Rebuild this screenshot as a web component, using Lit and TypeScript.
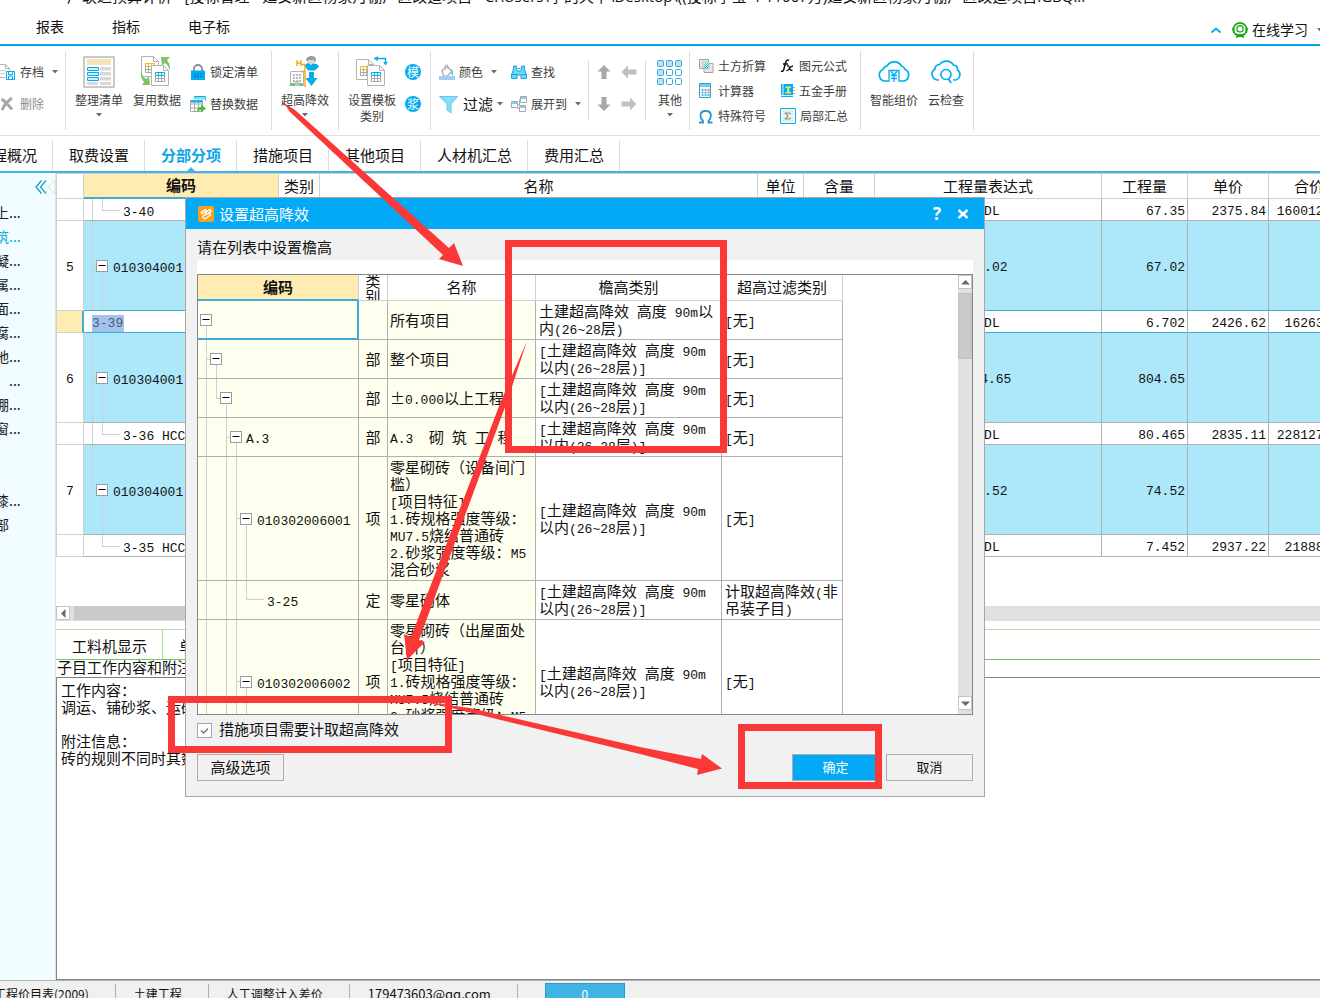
import { LitElement, html, svg, css, nothing, TemplateResult } from "lit";
import { customElement } from "lit/decorators.js";
import { classMap } from "lit/directives/class-map.js";

/* Latin runs use the monospaced face, everything else the CJK face. */
const mix = (text: string) =>
  text
    .split(/([\x20-\x7e]+)/)
    .filter((part) => part !== "")
    .map((part) => (/^[\x20-\x7e]+$/.test(part) ? html`<span class="mono">${part}</span>` : part));

const icon = (w: number, h: number, body: unknown) =>
  html`<svg class="icon" width=${w} height=${h} viewBox="0 0 ${w} ${h}" aria-hidden="true">${body}</svg>`;

const BLUE = "#00aeef";
const GREY = "#b4b4b4";

const sheet = (x: number, y: number, accent: string) => svg`
  <path d="M${x + 0.5} ${y + 0.5}h12l5 5v15h-17z" fill="#fff" stroke=${GREY}/>
  <path d="M${x + 12.5} ${y + 0.5}v5h5" fill="none" stroke=${GREY}/>
  <path d="M${x + 4.5} ${y + 7.5}h9v9h-9zM${x + 7.5} ${y + 7.5}v9M${x + 10.5} ${y + 7.5}v9M${x + 4.5} ${y + 10.5}h9M${x + 4.5} ${y + 13.5}h9" fill="none" stroke="#a8a8a8"/>
  <path d="M${x + 4.5} ${y + 7.5}h9v3h-9zM${x + 7.5} ${y + 7.5}v3M${x + 10.5} ${y + 7.5}v3" fill="none" stroke=${accent}/>`;

const gridCells = [0, 1, 2].flatMap((r) => [0, 1, 2].map((c) => [c, r]));

const icons: Record<string, TemplateResult> = {
  archive: icon(16, 16, svg`
    <path d="M-6 .5H5.5l4 4v2M-6 13.5H5M5.5 .5v4h4" fill="none" stroke=${GREY}/>
    <path d="M0 6.5h6M0 9.5h5" stroke="#d0d0d0"/>
    <path d="M6.5 7.5h8v8h-8z" fill="#fff" stroke=${BLUE}/>
    <path d="M8.5 8v2.5h4V8M8.5 15v-3h4v3" fill="none" stroke=${BLUE}/>`),
  remove: icon(16, 16, svg`<path d="M1.5 3Q6 6 12 13.5M12 2Q5 7 2 14" fill="none" stroke="#a6a6a6" stroke-width="2.8"/>`),
  arrange: icon(32, 32, svg`
    <path d="M1 1h30v30H1z" fill="#fff" stroke="#b8b8b8" stroke-width="1.5"/>
    <path d="M4 3h24v6H4z" fill="#f3e3b5"/>
    <path d="M17 11h11v3.5H17zM17 16h11v3.5H17zM17 21h11v3.5H17zM17 26h11v3H17zM4 26h11v3H4z" fill="#d8d8da"/>
    <path d="M4.5 11.5h11v3h-11zM4.5 16.5h11v3h-11zM4.5 21.5h11v3h-11z" fill="#d6edf8" stroke=${BLUE}/>`),
  reuse: icon(32, 32, svg`
    ${sheet(0, 0, "#fbb829")}${sheet(10, 9, BLUE)}
    <path d="M20 1h9l-3 3q4 5 2.5 11Q28 9 23.500 7L21 10z" fill="#7ec36b"/>
    <path d="M9 29H1l2-3Q-1 22 .5 16 2 22 5.500 23L8 20z" fill="#7ec36b"/>`),
  lock: icon(16, 16, svg`
    <path d="M4 8V5a4 4 0 0 1 8 0v3" fill="none" stroke="#8c8c94" stroke-width="1.8"/>
    <path d="M1 6.5h14V16H1z" fill=${BLUE}/>
    <path d="M4 10h2m1 0h2m1 0h2M4 12.5h2m1 0h2m1 0h2" stroke="#0076ae"/>`),
  replace: icon(16, 16, svg`
    <path d="M4 .5h11.5v4" fill="none" stroke=${BLUE}/><path d="M3.5 1h12v2.5h-12z" fill="#8fd9f5"/>
    <path d="M.5 4.5h12v11H.5zM.5 8h12M.5 12h12M4.5 5v10M8.5 5v10" fill="#fff" stroke="#a9a9a9"/>
    <path d="M.5 4.5h12v2H.5z" fill=${BLUE}/>
    <path d="M7 16q0-5 4-5V8.5l5 4-5 4V14q-2 0-4 2z" fill="#4fbf3b"/>`),
  height: icon(32, 32, svg`
    <path d="M1.5 15.5h13v14h-13z" fill="#fff" stroke=${GREY}/>
    <path d="M4 19h8M4 22h8M4 25h8" stroke="#b9b9b9" stroke-width="2" stroke-dasharray="2 1"/>
    <path d="M6 25h4v5H6z" fill="#b4cbd6"/><path d="M0 30l2-3h4v3zM10 30v-3h3l2 3z" fill="#7ec36b"/>
    <path d="M8 4v6M12 4v6M8 7h4M16 8v23M12 8.5h4M12 15.5h4" fill="none" stroke="#f9a21a" stroke-width="1.4"/>
    <path d="M17 4q1-4 5.5-4T27 4l-1 2h-7z" fill="#9b9b9b"/><path d="M19 4h6v3q-3 2.5-6 0z" fill="#d9d9d9"/>
    <path d="M16 10q2-4 4-2.5l2 1.5 2-1.5q4-.5 6 3l-4 4h-7z" fill=${BLUE}/>
    <path d="M20 16h5v6h3.5L22.5 30 16.5 22H20z" fill=${BLUE}/>`),
  template: icon(32, 32, svg`
    ${sheet(0, 3, "#fbb829")}${sheet(11, 9, BLUE)}
    <path d="M18 2.5h11.5V9" fill="none" stroke=${BLUE} stroke-width="1.4"/>
    <path d="M22 0v5l-4-2.5zM27 6h5l-2.5 3z" fill=${BLUE}/>`),
  colour: icon(16, 16, svg`
    <path d="M3 6.5l5-4 5 5-4.5 4.5H4.5z" fill="#fff" stroke="#a8a8a8" stroke-width="1.2"/>
    <path d="M6 6V2q1.5-3 3 0v3" fill="none" stroke="#a8a8a8"/>
    <path d="M12 4q3 4 1.5 8-2-2-1-5z" fill="#49cdec"/><path d="M0 12h16v4H0z" fill="#a0cbf3"/>`),
  filter: icon(20, 20, svg`<path d="M.5 2.5h18L12 10v9l-4-3v-6z" fill="#8bdcf8" stroke="#5cccf2"/>`),
  find: icon(16, 16, svg`
    <path d="M2.5 2h3v3l1 2h3l1-2V2h3v3l2 6v3.500h-5.5V11h-4v3.500H.5V11l2-6z" fill="#6fd4f7" stroke="#16a7df"/>
    <path d="M.5 10.5h5.5M10 10.5h5.5M6.5 4.5h3" stroke="#16a7df"/>`),
  expand: icon(16, 16, svg`
    <path d="M.5 5.5h6v6h-6zM9.500.5h6v6h-6zM8.500 9.5h6v6h-6z" fill="#fff" stroke="#a9a9a9"/>
    <path d="M1 6h5v2H1zM10 1h5v2h-5zM9 10h5v2H9z" fill="#7bd3f4"/><path d="M6.5 8.5h2v-5M8 12.5h-1.5" fill="none" stroke="#a9a9a9"/>`),
  up: icon(14, 16, svg`<path d="M7 1l6.5 6.5H9.5V15h-5V7.5H.5z" fill="#a8a8a8"/>`),
  down: icon(14, 16, svg`<path d="M7 15L.5 8.5h4V1h5v7.5h4z" fill="#a8a8a8"/>`),
  left: icon(16, 14, svg`<path d="M.5 7L7 .5v4h8.500v5H7v4z" fill="#bfbfbf"/>`),
  right: icon(16, 14, svg`<path d="M15.5 7L9 .5v4H.5v5H9v4z" fill="#bfbfbf"/>`),
  more: icon(26, 32, svg`${gridCells.map(([c, r]) => svg`<rect x=${c * 9 + 0.5} y=${r * 9 + 4.5} width="6" height="6" rx="1"
    fill=${r === 0 || c === 0 ? "#bfe0f2" : "#fff"} stroke="#2fa9d8"/>`)}`),
  soil: icon(15, 16, svg`
    <path d="M.5 1.5h9v9h-9zM5 5.5h9v9H5z" fill="#e6e6e6" stroke="#a2a2a2"/>
    <path d="M4 4h6v6H4z" fill="#e8fafa" stroke="#9cc"/><path d="M5 6.5h5M5 8.500h5M6.5 5v5M8.5 5v5" stroke="#3bb" stroke-dasharray="1 1"/>`),
  calc: icon(15, 16, svg`
    <path d="M.5.5h11v14H.5z" fill="#fff" stroke="#2d9fd0"/><path d="M1 1h10v3H1z" fill="#7cc9ea"/>
    <path d="M2.5 7h2m1 0h2M2.5 9.5h2m1 0h2m1 0h2M2.5 12h2m1 0h2m1 0h2" stroke="#2d9fd0" stroke-width="1.5"/><path d="M8.5 7h2" stroke="#f04e30" stroke-width="1.5"/>`),
  omega: icon(15, 16, svg`<path d="M0 14.500h4V13Q1.500 10.500 1.500 7.500 1.500 3 6.700 3t5.200 4.500Q11.900 10.500 9.500 13v1.500h4" fill="none" stroke="#2c93cf" stroke-width="1.8"/>`),
  fx: icon(15, 16, svg`
    <path d="M9 2.5Q6.5 1 5.5 5L3.8 11.5Q3.200 14 1 13M3 6h5" fill="none" stroke="#111" stroke-width="1.5"/>
    <path d="M7 8q2-1 2.5 2t3 2M13 8q-2 0-3.5 2.5T6.5 12.5" fill="none" stroke="#111" stroke-width="1.3"/>`),
  book: icon(15, 16, svg`
    <path d="M1 1h12v13H1z" fill=${BLUE}/><path d="M3 1v11M1 12.5h12" stroke="#d9f3fd"/>
    <path d="M5.500 3.500h5.500v1.500H9.300v4H11v1.500H5.500V9h1.700V5H5.500z" fill="#ffe14d"/><path d="M14 4v1m0 2v1m0 2v1" stroke="#1d6e96"/>`),
  sum: icon(16, 16, svg`
    <path d="M.5.5h15v15H.5z" fill="#eef8fd" stroke=${BLUE}/><path d="M2.5 3h11M2.5 13h11M3 6h2M3 9.5h2M11 6h2M11 9.5h2" stroke="#f5cf79" stroke-dasharray="2 1"/>
    <path d="M10 6.5V5H5.5L8 8l-2.5 3H10V9.5" fill="none" stroke="#8a8a8a" stroke-width="1.2"/>`),
  cloudYen: icon(32, 32, svg`
    <path d="M9 25H7a6 6 0 0 1-2-11.5A5 5 0 0 1 9 10a8.500 8.500 0 0 1 14.500 0A5 5 0 0 1 27 13.500 6 6 0 0 1 25 25h-2" fill="none" stroke=${BLUE} stroke-width="1.7"/>
    <path d="M8.500 25h2.500V14.500h10V25h2.500M13 15.500l3 3.500 3-3.500M16 19v7M13 19.500h6M13 22.500h6" fill="none" stroke=${BLUE} stroke-width="1.3"/>`),
  cloudFind: icon(32, 32, svg`
    <path d="M9 24H7A6 6 0 0 1 5 13Q5 9 9.5 8.500A8.5 8.5 0 0 1 23.5 9Q28 9.5 27.500 14A5.500 5.500 0 0 1 25 24h-2" fill="none" stroke=${BLUE} stroke-width="1.7"/>
    <circle cx="16" cy="18.5" r="5" fill="none" stroke=${BLUE} stroke-width="1.6"/><path d="M18.5 23l2.5 4" stroke=${BLUE} stroke-width="1.7"/>`),
  headset: icon(16, 16, svg`
    <circle cx="8" cy="7.5" r="6.600" fill="none" stroke="#18a818" stroke-width="1.6"/>
    <circle cx="8" cy="6.8" r="3.200" fill="#fff" stroke="#18a818" stroke-width="1.3"/>
    <path d="M0 6h2.5v5H1zM13.5 6H16l-1 5h-1.5zM4 16q.5-4 4-4t4 4l-2-.5-2-1.5-2 1.5z" fill="#18a818"/>
    <path d="M4 12l4 2 4-2" fill="none" stroke="#18a818" stroke-width="1.5"/>`),
  chevronUp: icon(12, 8, svg`<path d="M1.5 6.5L6 2.5l4.5 4" fill="none" stroke="#1ba9ea" stroke-width="2"/>`),
  collapse: icon(12, 14, svg`<path d="M6.5.5L1 7l5.500 6.5M11 .5L5.5 7l5.500 6.500" fill="none" stroke="#1b9fc9" stroke-width="1.3"/>`),
  notch: icon(7, 14, svg`<path d="M7 0v14L.5 7z" fill="#fff" stroke="#dcdcdc"/>`),
  app: icon(16, 16, svg`<rect width="16" height="16" rx="2" fill="#f8a11c"/>
    <path d="M3 6.500L7.500 3.500l1 1.500L4.500 8zM8 6l4-2.500 1 2L7.500 9zM5 10l6.500-3 1 2L7 13l-2-1.500z" fill="none" stroke="#fff" stroke-width="1.300"/>`),
  close: icon(12, 12, svg`<path d="M1.5 2l9 8M10.5 2l-9 8" stroke="#fff" stroke-width="2.4"/>`),
};

const caret = html`<svg class="caret" width="6" height="4" viewBox="0 0 6 4" aria-hidden="true"><path d="M0 0h6L3 3.5z" fill="#6a6a6a"/></svg>`;
const arrowHead = (d: string) => html`<svg width="9" height="9" viewBox="0 0 9 9" aria-hidden="true"><path d=${d} fill="#666a73"/></svg>`;

const big = (name: string, lines: string[], more = false) => html`
  <button class="big">${icons[name]}${lines.map((l) => html`<span>${l}</span>`)}${more ? caret : nothing}</button>`;
const small = (name: string, label: string, more = false, kind = "") => html`
  <button class="small ${kind}">${icons[name]}<span>${label}</span>${more ? caret : nothing}</button>`;
const badge = (glyph: string) => html`<button class="small"><span class="badge">${glyph}</span></button>`;

type Line = [number, number, number, number];
interface Tree { width: number; lines: Line[]; box?: [number, number]; }
const tree = (t: Tree, height: number) => html`
  <svg class="tree" width=${t.width} height=${height} viewBox="0 0 ${t.width} ${height}" aria-hidden="true">
    ${t.lines.map(([x1, y1, x2, y2]) => svg`<line x1=${x1} y1=${y1} x2=${x2} y2=${y2} stroke="#cfcfd2"/>`)}
    ${t.box
      ? svg`<rect x=${t.box[0]} y=${t.box[1]} width="11" height="11" fill="#fff" stroke="#9c9c9c"/>
            <line x1=${t.box[0] + 2} x2=${t.box[0] + 9} y1=${t.box[1] + 5} y2=${t.box[1] + 5} stroke="#000"/>`
      : nothing}
  </svg>`;

interface BillRow { no: string; code: string; kind: "item" | "child" | "edit"; last?: boolean; expr: string; qty: string; price: string; total: string; }
const bill: BillRow[] = [
  { no: "", code: "3-40", kind: "child", expr: "QDL", qty: "67.35", price: "2375.84", total: "160012.82" },
  { no: "5", code: "010304001", kind: "item", expr: "67.02", qty: "67.02", price: "", total: "" },
  { no: "", code: "3-39", kind: "edit", expr: "QDL", qty: "6.702", price: "2426.62", total: "16263.21" },
  { no: "6", code: "010304001", kind: "item", expr: "804.65", qty: "804.65", price: "", total: "" },
  { no: "", code: "3-36 HCC", kind: "child", expr: "QDL", qty: "80.465", price: "2835.11", total: "228127.13" },
  { no: "7", code: "010304001", kind: "item", last: true, expr: "74.52", qty: "74.52", price: "", total: "" },
  { no: "", code: "3-35 HCC", kind: "child", last: true, expr: "QDL", qty: "7.452", price: "2937.22", total: "21888.16" },
];
const billTree = (r: BillRow): Tree =>
  r.kind === "item"
    ? { width: 29, box: [12.5, 39.5], lines: [[8.5, 0, 8.5, r.last ? 45 : 89], [8, 45.5, 12, 45.5], [18.5, 51, 18.5, 89]] }
    : { width: 39, lines: [...(r.last ? [] : [[8.5, 0, 8.5, 21] as Line]), [18.5, 0, 18.5, 11], [18, 11.5, 36, 11.5]] };

const USUAL = "[土建超高降效 高度 90m\n以内(26~28层)]";
interface DropRow { h: number; code: string; type: string; name: string; eave: string; filter: string; t: Tree; }
const drops: DropRow[] = [
  { h: 38, code: "", type: "", name: "所有项目", eave: "土建超高降效 高度 90m以\n内(26~28层)", filter: "[无]",
    t: { width: 20, box: [2.5, 13.5], lines: [[8.5, 25, 8.5, 38]] } },
  { h: 38, code: "", type: "部", name: "整个项目", eave: USUAL, filter: "[无]",
    t: { width: 30, box: [12.5, 13.5], lines: [[8.5, 0, 8.5, 38], [8, 19.5, 12, 19.5], [18.5, 25, 18.5, 38]] } },
  { h: 38, code: "", type: "部", name: "±0.000以上工程", eave: USUAL, filter: "[无]",
    t: { width: 40, box: [22.5, 13.5], lines: [[8.5, 0, 8.5, 38], [18.5, 0, 18.5, 20], [18, 19.5, 22, 19.5], [28.5, 25, 28.5, 38]] } },
  { h: 38, code: "A.3", type: "部", name: "A.3  砌 筑 工 程", eave: USUAL, filter: "[无]",
    t: { width: 48, box: [32.5, 13.5], lines: [[8.5, 0, 8.5, 38], [28.5, 0, 28.5, 38], [28, 19.5, 32, 19.5], [38.5, 25, 38.5, 38]] } },
  { h: 123, code: "010302006001", type: "项", name: "零星砌砖（设备间门\n槛）\n[项目特征]\n1.砖规格强度等级：\nMU7.5烧结普通砖\n2.砂浆强度等级：M5\n混合砂浆", eave: USUAL, filter: "[无]",
    t: { width: 59, box: [42.5, 56.5], lines: [[8.5, 0, 8.5, 123], [28.5, 0, 28.5, 123], [38.5, 0, 38.5, 123], [38, 61.5, 42, 61.5], [48.5, 68, 48.5, 123]] } },
  { h: 38, code: "3-25", type: "定", name: "零星砌体", eave: USUAL, filter: "计取超高降效(非\n吊装子目)",
    t: { width: 69, lines: [[8.5, 0, 8.5, 38], [28.5, 0, 28.5, 38], [38.5, 0, 38.5, 38], [48.5, 0, 48.5, 19], [48, 18.5, 66, 18.5]] } },
  { h: 123, code: "010302006002", type: "项", name: "零星砌砖（出屋面处\n台阶）\n[项目特征]\n1.砖规格强度等级：\nMU7.5烧结普通砖\n2.砂浆强度等级：M5\n混合砂浆", eave: USUAL, filter: "[无]",
    t: { width: 59, box: [42.5, 56.5], lines: [[8.5, 0, 8.5, 123], [28.5, 0, 28.5, 123], [38.5, 0, 38.5, 123], [38, 61.5, 42, 61.5], [48.5, 68, 48.5, 123]] } },
];

const shared = css`
  * { box-sizing: border-box; }
  .mono { font-family: "Liberation Mono", monospace; font-size: 13px; line-height: 11px; white-space: pre; }
  button { font: inherit; color: inherit; background: none; border: 0; padding: 0; margin: 0; }
  svg { display: block; flex: none; }
  table { border-collapse: separate; border-spacing: 0; table-layout: fixed; }
  th { font-weight: 400; padding: 0 0 2px; text-align: center; }
  td { padding: 0 0 2px; }
  .tree-cell { display: flex; align-items: center; white-space: nowrap; overflow: hidden; }
  .tree-cell span { padding-bottom: 1px; }
`;

@customElement("ribbon-bar")
class RibbonBar extends LitElement {
  static styles = [shared, css`
    :host { display: block; font-size: 12px; line-height: 16px; color: #3c3c3c; }
    .ribbon { display: flex; padding: 5px 0; height: 90px; border-bottom: 1px solid #dedede; background: #fff; white-space: nowrap; }
    .group { display: flex; flex: none; align-items: flex-start; }
    .sep { flex: none; width: 1px; background: #dcdcdc; }
    .sep.short { margin: 9px 0 10px; }
    .col { display: flex; flex-direction: column; padding-top: 5px; }
    .small { display: flex; align-items: center; gap: 4px; height: 32px; }
    .small .caret { margin-left: 4px; }
    .big { display: flex; flex: none; flex-direction: column; align-items: center; width: 58px; padding-top: 5px; }
    .big .icon { margin-bottom: 4px; }
    .big .caret { margin-top: 5px; }
    .muted { color: #8c8c8c; }
    .strong { font-size: 15px; color: #111; }
    .strong .caret { margin-left: 0; }
    .badge { width: 16px; height: 16px; border-radius: 8px; background: #00aeef; color: #fff; font-size: 12px; line-height: 16px; text-align: center; }
    .edit { padding-left: 4px; }
    .archive { width: 65px; }
    .list { width: 205px; padding-left: 4px; }
    .height { width: 66px; padding-left: 4px; }
    .template { width: 91px; padding-left: 4px; }
    .template .col { padding-left: 4px; }
    .view { width: 157px; padding-left: 8px; }
    .view .col { width: 72px; }
    .view .col + .col { width: 77px; }
    .move { display: grid; grid-template-columns: 16px 16px; align-content: start; gap: 0 9px; padding: 5px 9px 0 7px; width: 56px; }
    .move button { display: grid; place-items: center; height: 32px; }
    .other { width: 43px; }
    .other .big { width: 48px; }
    .tools { display: grid; grid-template-columns: 81px 81px; align-content: start; width: 170px; padding: 2px 0 0 9px; }
    .tools .small { height: 25px; }
    .cloud { width: 112px; padding-left: 4px; }
    .cloud .big + .big { width: 46px; }
  `];
  render() {
    const sep = html`<i class="sep"></i>`;
    const short = html`<i class="sep short"></i>`;
    return html`<div class="ribbon">
      <div class="group archive"><div class="col">${small("archive", "存档", true)}${small("remove", "删除", false, "muted")}</div></div>${sep}
      <div class="group list">${big("arrange", ["整理清单"], true)}${big("reuse", ["复用数据"])}
        <div class="col edit">${small("lock", "锁定清单")}${small("replace", "替换数据")}</div></div>${sep}
      <div class="group height">${big("height", ["超高降效"], true)}</div>${sep}
      <div class="group template">${big("template", ["设置模板", "类别"])}<div class="col">${badge("模")}${badge("浆")}</div></div>${sep}
      <div class="group view">
        <div class="col">${small("colour", "颜色", true)}${small("filter", "过滤", true, "strong")}</div>
        <div class="col">${small("find", "查找")}${small("expand", "展开到", true)}</div></div>${short}
      <div class="group move">
        <button aria-label="上移">${icons.up}</button><button aria-label="左移">${icons.left}</button>
        <button aria-label="下移">${icons.down}</button><button aria-label="右移">${icons.right}</button></div>${short}
      <div class="group other">${big("more", ["其他"], true)}</div>${sep}
      <div class="group tools">${small("soil", "土方折算")}${small("fx", "图元公式")}${small("calc", "计算器")}${small("book", "五金手册")}${small("omega", "特殊符号")}${small("sum", "局部汇总")}</div>${sep}
      <div class="group cloud">${big("cloudYen", ["智能组价"])}${big("cloudFind", ["云检查"])}</div>${sep}
    </div>`;
  }
}

@customElement("bill-grid")
class BillGrid extends LitElement {
  static styles = [shared, css`
    :host { display: block; overflow: hidden; border-left: 1px solid #d0d0d0; border-top: 1px solid #d0d0d0; line-height: 17px; }
    table { width: 1293px; }
    th, td { border-right: 1px solid #d0d0d0; border-bottom: 1px solid #d0d0d0; white-space: nowrap; overflow: hidden; }
    th { height: 25px; }
    td { border-color: #b0b0b0; }
    td:first-child { text-align: center; border-color: #d0d0d0; }
    td.cell { padding: 0; }
    .code { background: #ffecb2; font-weight: 700; border-bottom: 2px solid #40acd4; }
    .item td:not(:first-child) { background: #ade8fa; }
    .c { text-align: center; }
    .r { text-align: right; padding-right: 2px; }
    .edit td:not(:first-child), .above td:not(:first-child) { border-bottom-color: #40acd4; }
    .edit td:first-child { background: #ffecb2; border-right: 2px solid #40acd4; }
    .entry { display: block; width: 32px; height: 17px; margin: 4px 0 0 8px; padding: 0; border: 0; background: #a4c2ef; color: #4d5a70; font: 13px/17px "Liberation Mono", monospace; }
  `];
  render() {
    return html`<table>
      <colgroup><col width="27"><col width="195"><col width="41"><col width="438"><col width="46"><col width="71"><col width="227"><col width="86"><col width="81"><col width="81"></colgroup>
      <thead><tr><th></th><th class="code">编码</th>${["类别", "名称", "单位", "含量", "工程量表达式", "工程量", "单价", "合价"].map((h) => html`<th>${h}</th>`)}</tr></thead>
      <tbody>${bill.map((r, i) => {
        const h = r.kind === "item" ? 89 : 21;
        return html`<tr class=${classMap({ item: r.kind === "item", edit: r.kind === "edit", above: bill[i + 1]?.kind === "edit" })}>
          <td>${mix(r.no)}</td>
          <td class="cell">${r.kind === "edit"
            ? html`<div class="tree-cell"><svg width="0" height="21"></svg><input class="entry" aria-label="编码" .value=${r.code}></div>`
            : html`<div class="tree-cell">${tree(billTree(r), h)}<span>${mix(r.code)}</span></div>`}</td>
          <td></td><td></td><td></td><td></td>
          <td class="c">${mix(r.expr)}</td><td class="r">${mix(r.qty)}</td><td class="r">${mix(r.price)}</td><td class="r">${mix(r.total)}</td>
        </tr>`;
      })}</tbody></table>`;
  }
}

@customElement("drop-dialog")
class DropDialog extends LitElement {
  static styles = [shared, css`
    :host { display: flex; flex-direction: column; border: 1px solid #a6a6a6; background: #f1f1f1; line-height: 17px; }
    .title { display: flex; align-items: center; height: 31px; padding: 0 14px 0 12px; background: #03a9f4; color: #fff; }
    .title h2 { flex: 1; margin: 0 0 0 5px; font-size: 15px; font-weight: 400; }
    .title button { display: grid; place-items: center; width: 26px; height: 26px; }
    .help { font: 700 17px/26px "Open Sans", sans-serif; }
    .title .shut { width: 14px; margin-left: 6px; }
    .body { flex: 1; display: flex; flex-direction: column; min-height: 0; padding: 0 11px; }
    .hint { margin: 0; height: 31px; padding-top: 9px; }
    .strip { height: 14px; background: #fff; }
    .frame { display: flex; height: 441px; overflow: hidden; border: 1px solid #828790; background: #fff; }
    .view { flex: 1; overflow: hidden; }
    table { width: 645px; }
    th, td { border-right: 1px solid #d0d0d0; border-bottom: 1px solid #d0d0d0; overflow: hidden; }
    th { height: 26px; }
    th.wrap { padding: 0; }
    .tall { width: 15px; height: 25px; margin: 0 auto; line-height: 15px; display: flex; align-items: center; }
    td { border-color: #b0b0b0; white-space: pre; padding-left: 3px; }
    td:nth-child(-n + 3) { background: #fffff0; }
    .code { background: #ffecb2; font-weight: 700; border-bottom: 2px solid #40acd4; }
    .first td:first-child { border-right: 2px solid #40acd4; border-bottom: 2px solid #40acd4; }
    td.cell { padding: 0; }
    td.type { padding: 0 0 2px; text-align: center; }
    td.name { padding-left: 2px; }
    .bar { width: 14px; background: #e1e1e1; display: flex; flex-direction: column; padding-bottom: 4px; }
    .bar button { display: grid; place-items: center; width: 14px; height: 14px; background: #fff; border: 1px solid #c4c4c4; }
    .thumb { height: 66px; margin-top: 4px; background: #cacaca; border: 1px solid #c0c0c0; }
    .space { flex: 1; }
    .check { display: flex; align-items: center; gap: 7px; height: 30px; margin-bottom: 9px; }
    .check span { padding-bottom: 3px; }
    .check input { appearance: none; width: 15px; height: 15px; margin: 0; border: 1px solid #a6a6a6; background: #fff
      url("data:image/svg+xml,%3Csvg xmlns='http://www.w3.org/2000/svg' viewBox='0 0 13 13'%3E%3Cpath d='M3 6.500l2.500 2.500L10 4.500' fill='none' stroke='%23707880' stroke-width='1.500'/%3E%3C/svg%3E"); }
    .actions { display: flex; gap: 7px; }
    .actions button { width: 87px; height: 27px; padding-bottom: 2px; border: 1px solid #adadad; font-size: 13px; }
    .actions .more { margin-right: auto; font-size: 15px; }
    .actions .ok { background: #03a9f4; color: #fff; }
  `];
  render() {
    return html`
      <div class="title">${icons.app}<h2>设置超高降效</h2><button class="help" aria-label="帮助">?</button><button class="shut" aria-label="关闭">${icons.close}</button></div>
      <div class="body">
        <p class="hint">请在列表中设置檐高</p>
        <div class="strip"></div>
        <div class="frame">
          <div class="view"><table>
            <colgroup><col width="161"><col width="29"><col width="148"><col width="186"><col width="121"></colgroup>
            <thead><tr><th class="code">编码</th><th class="wrap"><div class="tall">类别</div></th><th>名称</th><th>檐高类别</th><th>超高过滤类别</th></tr></thead>
            <tbody>${drops.map((r, i) => html`<tr class=${classMap({ first: i === 0 })}>
              <td class="cell"><div class="tree-cell">${tree(r.t, i === 0 ? 37 : r.h)}<span>${mix(r.code)}</span></div></td>
              <td class="type">${r.type}</td><td class="name">${mix(r.name)}</td><td>${mix(r.eave)}</td><td>${mix(r.filter)}</td></tr>`)}</tbody>
          </table></div>
          <div class="bar"><button aria-label="向上">${arrowHead("M0 6.5h9L4.5 2z")}</button><div class="thumb"></div><div class="space"></div><button aria-label="向下">${arrowHead("M0 2.5h9L4.5 7z")}</button></div>
        </div>
        <label class="check"><input type="checkbox" checked><span>措施项目需要计取超高降效</span></label>
        <div class="actions"><button class="more">高级选项</button><button class="ok">确定</button><button>取消</button></div>
      </div>`;
  }
}

@customElement("app-root")
class AppRoot extends LitElement {
  static styles = [shared, css`
    :host { display: flex; flex-direction: column; position: relative; height: 100vh; overflow: hidden; background: #fff; color: #111;
      font-family: "Noto Sans CJK SC", sans-serif; font-size: 15px; line-height: 17px; }
    .caption { flex: none; height: 8px; overflow: hidden; padding-left: 67px; white-space: nowrap; line-height: 20px; font-family: "Open Sans", "Noto Sans CJK SC", sans-serif; }
    .caption span { display: block; margin-top: -14px; }
    .menu { flex: none; display: flex; align-items: center; gap: 48px; height: 38px; padding-left: 36px; border-bottom: 2px solid #00a8f3; font-size: 14px; }
    .learn { display: flex; align-items: center; gap: 4px; margin: 7px -3px 0 auto; }
    .learn .icon:first-child { margin-right: 6px; }
    .learn .caret { margin-left: 5px; }
    .tabs { flex: none; display: flex; height: 37px; padding-top: 4px; border-bottom: 2px solid #40b4e5; overflow: hidden; }
    .tabs button { flex: none; position: relative; padding: 0 15px 2px 16px; border-right: 1px solid #dcdcdc; }
    .tabs button:first-child { margin-left: -39px; }
    .tabs .on { color: #0ba5e6; font-weight: 700; }
    .tabs .on::after { content: ""; position: absolute; left: 42px; bottom: 0; border: 4px solid transparent; border-top: 0; border-bottom-color: #40b4e5; }
    .work { flex: 1; display: flex; min-height: 0; }
    aside { flex: none; width: 56px; background: #f0fcff; overflow: hidden; border-right: 1px solid #e2e2e2; }
    .fold { display: flex; align-items: center; justify-content: space-between; height: 27px; padding-left: 35px; }
    aside a { display: block; height: 24px; line-height: 24px; margin-left: -5px; font-size: 14px; white-space: pre; color: #222; text-decoration: none; }
    aside a.on { color: #1ba9d8; }
    main { flex: 1; min-width: 0; display: flex; flex-direction: column; }
    .scroll { flex: none; display: flex; height: 15px; margin-top: auto; background: #e0e0e0; }
    .scroll button { display: grid; place-items: center; width: 14px; height: 14px; background: #fff; border: 1px solid #c4c4c4; }
    .scroll .thumb { width: 70%; margin: 0 0 1px 4px; background: #cacaca; }
    .upper { flex: none; height: 448px; display: flex; flex-direction: column; }
    .lower-tabs { flex: none; display: flex; margin-top: 8px; height: 31px; border-top: 1px solid #b5e0a5; border-bottom: 1px solid #74c760; }
    .lower-tabs button { padding: 2px 15px 0 16px; border-right: 1px solid #a8e090; }
    .sub { flex: none; height: 17px; margin: 0; padding-left: 1px; line-height: 14px; }
    .note { flex: 1; display: block; width: 100%; min-height: 0; margin: 0; padding: 3px 4px; border: 1px solid #828282; border-right: 0; resize: none; outline: 0; overflow: hidden; font: inherit; color: inherit; }
    footer { flex: none; display: flex; height: 18px; border-top: 1px solid #b4b4b4; background: #f0f0f0; overflow: hidden; font-size: 12px; white-space: nowrap; }
    footer span { margin-top: 3px; line-height: 20px; padding: 0 26px 0 18px; border-right: 1px solid #a8b0b8; }
    footer span:first-child { margin-left: -24px; }
    footer .mail { font-size: 13px; }
    footer output { width: 80px; height: 24px; margin: 2px 0 0 27px; background: #42b4e4; border: 1px solid #2899c9; color: #fff; text-align: center; line-height: 20px; }
    drop-dialog { position: absolute; left: 185px; top: 197px; width: 800px; height: 600px; }
    .marks { position: absolute; left: 0; top: 0; pointer-events: none; }
  `];
  render() {
    const side = ["上...", "筑...", "凝...", "属...", "面...", "腐...", "地...", "　...", "棚...", "窗...", "", "", "漆...", "部"];
    return html`
      <div class="caption"><span>广联达预算计价 - [投标管理 - 延安新区杨家月棚户区改造项目 - C:\\Users\\李的天下\\Desktop\\((投标李宝-4-11007万)延安新区杨家月棚户区改造项目.GBQ...</span></div>
      <nav class="menu"><button>报表</button><button>指标</button><button>电子标</button>
        <button class="learn">${icons.chevronUp}${icons.headset}<span>在线学习</span>${caret}</button></nav>
      <ribbon-bar></ribbon-bar>
      <nav class="tabs">${["工程概况", "取费设置", "分部分项", "措施项目", "其他项目", "人材机汇总", "费用汇总"].map((t) => html`<button class=${classMap({ on: t === "分部分项" })}>${t}</button>`)}</nav>
      <div class="work">
        <aside><div class="fold">${icons.collapse}${icons.notch}</div>
          ${side.map((s, i) => html`<a href="#" class=${classMap({ on: i === 1 })}>${s}</a>`)}</aside>
        <main>
          <div class="upper"><bill-grid></bill-grid>
            <div class="scroll"><button aria-label="向左">${arrowHead("M6.5 0v9L2 4.5z")}</button><div class="thumb"></div></div></div>
          <div class="lower-tabs"><button>工料机显示</button><button>单价构成</button></div>
          <label class="sub" for="note">子目工作内容和附注信息</label>
          <textarea id="note" class="note" readonly .value=${"工作内容：\n调运、铺砂浆、运砖、砌砖\n\n附注信息：\n砖的规则不同时其数量可以换算"}></textarea>
        </main>
      </div>
      <footer><span>工程价目表(2009)</span><span>土建工程</span><span>人工调整计入差价</span><span class="mail">179473603@qq.com</span><output>0</output></footer>
      <drop-dialog role="dialog" aria-label="设置超高降效"></drop-dialog>
      <svg class="marks" width="1320" height="998" viewBox="0 0 1320 998" aria-hidden="true">
        <g fill="none" stroke="#fb3838" stroke-width="7"><path d="M508.5 243.5h215v206h-215zM171.5 699.5h277v50h-277zM741.5 727.5h137v58h-137z"/></g>
        <g fill="#fb3838"><path d="M284 103L295 110 449 248 454 243 463 266 439 259 443 255 290 112z"/>
          <path d="M527 341L508 399 419 640 425 642 407 660 404 634 411 637 501 401z"/>
          <path d="M425 702L470 708 640 747 701 759 702 754 722 768.5 697 775 698 769 640 754 468 712z"/></g>
      </svg>`;
  }
}
